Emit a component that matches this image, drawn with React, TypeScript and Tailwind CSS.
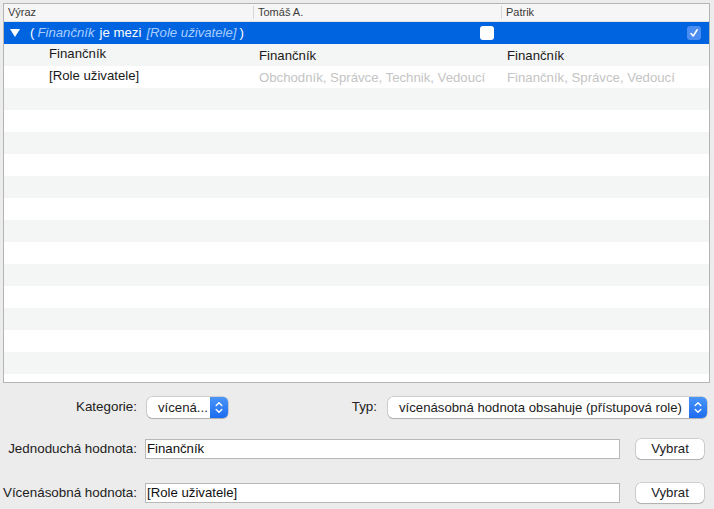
const font = { fontFamily: '"Liberation Sans", Arial, sans-serif' };

const Stepper = () => (
  <div className="w-[18px] h-full rounded-r-[5px] bg-gradient-to-b from-[#4a95f8] to-[#1a6bf0] flex items-center justify-center">
    <svg width="8" height="13" viewBox="0 0 8 13" fill="none" stroke="white" strokeWidth="1.4" strokeLinecap="round" strokeLinejoin="round">
      <path d="M1.2 4.5 L4 1.8 L6.8 4.5" />
      <path d="M1.2 8.5 L4 11.2 L6.8 8.5" />
    </svg>
  </div>
);

const Popup = ({ text, w }: { text: string; w: string }) => (
  <div className={`${w} h-[21px] flex rounded-[5px] bg-white shadow-[0_0_0_0.5px_rgba(0,0,0,0.25),0_1px_1px_rgba(0,0,0,0.15)]`}>
    <div className="flex-1 pl-[11px] text-[13.2px] leading-[21px] text-[#222] whitespace-nowrap overflow-hidden">{text}</div>
    <Stepper />
  </div>
);

const Button = ({ label }: { label: string }) => (
  <div className="w-[68px] h-[20px] rounded-[5px] bg-white shadow-[0_0_0_0.5px_rgba(0,0,0,0.25),0_1px_1px_rgba(0,0,0,0.15)] text-[13.2px] leading-[20px] text-center text-[#222]">
    {label}
  </div>
);

const Row = ({ c1, c2, c3, gray, muted }: { c1?: string; c2?: string; c3?: string; gray: boolean; muted?: boolean }) => (
  <div className={`h-[22px] shrink-0 grid grid-cols-[250px_248px_1fr] text-[13.2px] ${gray ? "bg-[#f4f5f5]" : "bg-white"}`}>
    <div className="pl-[45px] text-[#1a1a1a] leading-[20px]">{c1}</div>
    <div className={`pl-[5px] whitespace-nowrap leading-[23px] ${muted ? "text-[#c4c4c4]" : "text-[#1a1a1a]"}`}>{c2}</div>
    <div className={`pl-[5px] whitespace-nowrap leading-[23px] ${muted ? "text-[#c4c4c4]" : "text-[#1a1a1a]"}`}>{c3}</div>
  </div>
);

export default function App() {
  const filler = Array.from({ length: 14 }, (_, i) => i);
  return (
    <div className="w-[714px] h-[509px] bg-[#ececec] pt-[3px] overflow-hidden" style={font}>
      <div className="ml-[3px] w-[707px] h-[380px] border border-[#b4b4b4] bg-white flex flex-col overflow-hidden">
        <div className="h-[18px] shrink-0 grid grid-cols-[250px_248px_1fr] bg-[#f6f6f6] border-b border-[#e2e2e2] text-[11px] text-[#3a3a3a]">
          <div className="pl-[4px] border-r border-[#d6d6d6] my-[2px] leading-[13px]">Výraz</div>
          <div className="pl-[4px] border-r border-[#d6d6d6] my-[2px] leading-[13px]">Tomáš A.</div>
          <div className="pl-[4px] my-[2px] leading-[13px]">Patrik</div>
        </div>
        <div className="h-[22px] shrink-0 grid grid-cols-[250px_248px_1fr] bg-[#0064e1] text-[13.2px] leading-[22px] text-white">
          <div className="flex items-center whitespace-nowrap">
            <svg width="10" height="8" viewBox="0 0 10 8" className="ml-[6px] mr-[10px]">
              <path d="M0 0 H10 L5 8 Z" fill="white" />
            </svg>
            <span>(</span>
            <span className="italic text-[#a8cdff] ml-[3px]">Finančník</span>
            <span className="ml-[5px]">je mezi</span>
            <span className="italic text-[#a8cdff] ml-[5px]">[Role uživatele]</span>
            <span className="ml-[3px]">)</span>
          </div>
          <div className="flex items-center justify-end pr-[8px]">
            <div className="w-[14px] h-[14px] rounded-[3px] bg-white" />
          </div>
          <div className="flex items-center justify-end pr-[8px]">
            <div className="w-[14px] h-[14px] rounded-[3px] bg-[#4b8ef2] flex items-center justify-center">
              <svg width="10" height="10" viewBox="0 0 10 10" fill="none" stroke="white" strokeWidth="1.6" strokeLinecap="round" strokeLinejoin="round">
                <path d="M2 5.5 L4.2 8 L8.2 1.8" />
              </svg>
            </div>
          </div>
        </div>
        <Row c1="Finančník" c2="Finančník" c3="Finančník" gray />
        <Row c1="[Role uživatele]" c2="Obchodník, Správce, Technik, Vedoucí" c3="Finančník, Správce, Vedoucí" gray={false} muted />
        {filler.map((i) => (
          <Row key={i} gray={i % 2 === 0} />
        ))}
      </div>

      <div className="mt-[14px] flex items-center h-[21px] text-[13.4px] text-[#222]">
        <div className="w-[137px] text-right">Kategorie:</div>
        <div className="ml-[10px]">
          <Popup text="vícená..." w="w-[81px]" />
        </div>
        <div className="w-[149px] text-right">Typ:</div>
        <div className="ml-[11px]">
          <Popup text="vícenásobná hodnota obsahuje (přístupová role)" w="w-[319px]" />
        </div>
      </div>

      <div className="mt-[21px] flex items-center h-[20px] text-[13.4px] text-[#222]">
        <div className="w-[137px] text-right whitespace-nowrap">Jednoduchá hodnota:</div>
        <div className="ml-[8px] w-[475px] h-[20px] bg-white border border-[#b8b8b8] pl-[1px] text-[13.2px] leading-[18px] text-[#111]">Finančník</div>
        <div className="ml-[16px]">
          <Button label="Vybrat" />
        </div>
      </div>

      <div className="mt-[24px] flex items-center h-[20px] text-[13.4px] text-[#222]">
        <div className="w-[137px] text-right whitespace-nowrap">Vícenásobná hodnota:</div>
        <div className="ml-[8px] w-[475px] h-[20px] bg-white border border-[#b8b8b8] pl-[1px] text-[13.2px] leading-[18px] text-[#111]">[Role uživatele]</div>
        <div className="ml-[16px]">
          <Button label="Vybrat" />
        </div>
      </div>
    </div>
  );
}
